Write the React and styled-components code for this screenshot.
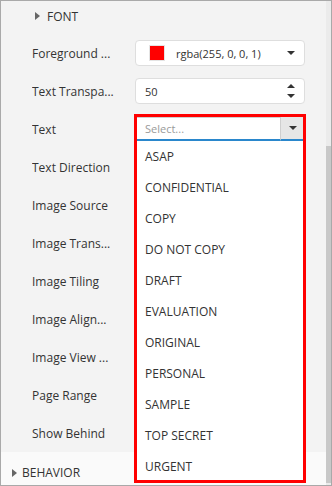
import styled, { createGlobalStyle } from 'styled-components';

const GlobalStyle = createGlobalStyle`
  body {
    margin: 0;
    font-family: "Open Sans", "Liberation Sans", sans-serif;
    color: #333;
  }
`;

const watermarkTexts = [
  'ASAP',
  'CONFIDENTIAL',
  'COPY',
  'DO NOT COPY',
  'DRAFT',
  'EVALUATION',
  'ORIGINAL',
  'PERSONAL',
  'SAMPLE',
  'TOP SECRET',
  'URGENT',
];

const rows = [
  { id: 'fg', label: 'Foreground ...', control: 'color' },
  { id: 'transp', label: 'Text Transpa...', control: 'number' },
  { id: 'text', label: 'Text', control: 'select' },
  { id: 'dir', label: 'Text Direction' },
  { id: 'src', label: 'Image Source' },
  { id: 'itrans', label: 'Image Trans...' },
  { id: 'tiling', label: 'Image Tiling' },
  { id: 'align', label: 'Image Align...' },
  { id: 'view', label: 'Image View ...' },
  { id: 'range', label: 'Page Range' },
  { id: 'behind', label: 'Show Behind' },
];

const Triangle = ({ dir = 'right', size = 4, color = '#555' }) => {
  const d = {
    right: `M0 0 L${size} ${size * 0.8} L0 ${size * 1.6} Z`,
    down: `M0 0 L${size * 2} 0 L${size} ${size} Z`,
    up: `M0 ${size} L${size} 0 L${size * 2} ${size} Z`,
  }[dir];
  const w = dir === 'right' ? size : size * 2;
  const h = dir === 'right' ? size * 1.6 : size;
  return (
    <svg width={w} height={h} viewBox={`0 0 ${w} ${h}`}>
      <path d={d} fill={color} />
    </svg>
  );
};

const App = () => {
  return (
    <>
      <GlobalStyle />
      <Panel>
        <Content>
          <SubHeader>
            <Triangle dir="right" size={5} color="#666" />
            <span>FONT</span>
          </SubHeader>
          <Rows>
            {rows.map((row) => (
              <Row key={row.id}>
                <Label>{row.label}</Label>
                <Control>
                  {row.control === 'color' && (
                    <Field>
                      <Swatch $color="#ff0000" />
                      <FieldText>rgba(255, 0, 0, 1)</FieldText>
                      <Triangle dir="down" size={4} color="#333" />
                    </Field>
                  )}
                  {row.control === 'number' && (
                    <Field $pad="9px">
                      <FieldText>50</FieldText>
                      <Spinner>
                        <Triangle dir="up" size={4} color="#333" />
                        <Triangle dir="down" size={4} color="#333" />
                      </Spinner>
                    </Field>
                  )}
                  {row.control === 'select' && (
                    <Combo>
                      <SelectInput>Select...</SelectInput>
                      <SelectButton>
                        <Triangle dir="down" size={4} color="#333" />
                      </SelectButton>
                      <List>
                        {watermarkTexts.map((t) => (
                          <Item key={t}>{t}</Item>
                        ))}
                      </List>
                      <Highlight />
                    </Combo>
                  )}
                </Control>
              </Row>
            ))}
          </Rows>
          <SectionHeader>
            <Triangle dir="right" size={5} color="#666" />
            <span>BEHAVIOR</span>
          </SectionHeader>
        </Content>
        <ScrollTrack>
          <Thumb />
        </ScrollTrack>
      </Panel>
    </>
  );
};

const Panel = styled.div`
  width: 332px;
  height: 486px;
  box-sizing: border-box;
  border: 1px solid #a9a9a9;
  background-color: #f3f3f3;
  display: flex;
  overflow: hidden;
`;

const Content = styled.div`
  flex: 1;
  min-width: 0;
  display: flex;
  flex-direction: column;
`;

const SubHeader = styled.div`
  height: 30px;
  flex-shrink: 0;
  display: flex;
  align-items: center;
  gap: 7px;
  padding-left: 34px;
  font-size: 12px;
`;

const Rows = styled.div`
  padding-top: 3px;
  display: flex;
  flex-direction: column;
`;

const Row = styled.div`
  height: 38px;
  display: flex;
  align-items: center;
  gap: 11px;
  padding-left: 31px;
`;

const Label = styled.div`
  width: 92px;
  font-size: 12px;
  white-space: nowrap;
  overflow: hidden;
  text-overflow: ellipsis;
  color: #333;
`;

const Control = styled.div`
  width: 170px;
`;

const Field = styled.div`
  height: 26px;
  box-sizing: border-box;
  background: #fff;
  border: 1px solid #dedede;
  border-radius: 4px;
  display: flex;
  align-items: center;
  padding: 0 9px 0 ${(p) => p.$pad || '13px'};
`;

const Swatch = styled.span`
  width: 16px;
  height: 16px;
  box-sizing: border-box;
  background: ${(p) => p.$color};
  border: 1px solid #e4e4e4;
  margin-right: 11px;
`;

const FieldText = styled.span`
  flex: 1;
  font-size: 11px;
  color: #333;
`;

const Spinner = styled.div`
  display: flex;
  flex-direction: column;
  gap: 6px;
`;

const Combo = styled.div`
  position: relative;
  height: 24px;
  display: flex;
`;

const SelectInput = styled.div`
  flex: 1;
  box-sizing: border-box;
  background: #fff;
  border: 1px solid #cfcfcf;
  border-bottom: 2px solid #2a87cc;
  padding-left: 9px;
  font-size: 11px;
  color: #9a9a9a;
  display: flex;
  align-items: center;
`;

const SelectButton = styled.div`
  width: 24px;
  background: #e6e6e6;
  border-bottom: 2px solid #2a87cc;
  box-sizing: border-box;
  display: flex;
  align-items: center;
  justify-content: center;
`;

const List = styled.ul`
  position: absolute;
  top: 100%;
  left: 0;
  right: 0;
  margin: 0;
  padding: 0;
  list-style: none;
  background: #fff;
  z-index: 2;
`;

const Item = styled.li`
  height: 31px;
  display: flex;
  align-items: center;
  padding-left: 10px;
  font-size: 12px;
  color: #333;
`;

const Highlight = styled.div`
  position: absolute;
  top: -3px;
  left: -1px;
  right: -1px;
  height: 369px;
  box-sizing: border-box;
  border: 3px solid #ff0000;
  pointer-events: none;
  z-index: 3;
`;

const SectionHeader = styled.div`
  flex: 1;
  background: #fafafa;
  display: flex;
  align-items: center;
  gap: 5px;
  padding-left: 11px;
  padding-top: 8px;
  font-size: 12px;
`;

const ScrollTrack = styled.div`
  width: 5px;
  background: #ebebeb;
  display: flex;
  flex-direction: column;
`;

const Thumb = styled.div`
  flex: 1;
  margin-top: 145px;
  margin-bottom: 2px;
  background: #c8c8c8;
`;

export default App;
